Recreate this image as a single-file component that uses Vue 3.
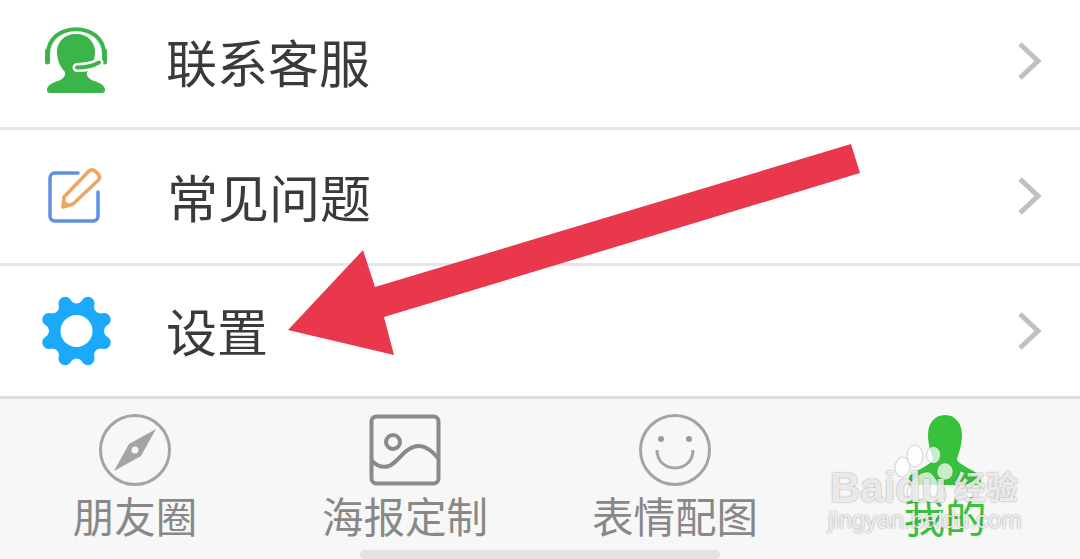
<script setup>
// gear outline: radius swings between notches and 8 flat-topped teeth
const gearPath = (() => {
  const points = []
  for (let i = 0; i < 360; i += 3) {
    const a = (i * Math.PI) / 180
    const wave = Math.cos(8 * (a - Math.PI / 8))
    const r = 32 + 4.5 * Math.sign(wave) * Math.pow(Math.abs(wave), 0.6)
    points.push(`${(36.5 + r * Math.sin(a)).toFixed(2)} ${(36 - r * Math.cos(a)).toFixed(2)}`)
  }
  return 'M' + points.join('L') + 'Z'
})()

const rows = [
  { id: 'service', label: '联系客服' },
  { id: 'faq', label: '常见问题' },
  { id: 'settings', label: '设置' }
]

const tabs = [
  { id: 'moments', label: '朋友圈' },
  { id: 'poster', label: '海报定制' },
  { id: 'emoji', label: '表情配图' },
  { id: 'me', label: '我的', active: true }
]
</script>

<template>
  <div class="page">
    <div class="menu">
      <div v-for="row in rows" :key="row.id" class="row" :class="'row-' + row.id">
        <div class="row-icon">
          <svg v-if="row.id === 'service'" width="72" height="72" viewBox="0 0 72 72">
            <path d="M8 31C8 -2 64 -2 64 31" fill="none" stroke="#3bb54a" stroke-width="4" />
            <path d="M7.500 28V39M64.500 28V39" stroke="#3bb54a" stroke-width="5" stroke-linecap="round" />
            <path d="M36 11C48 11 55 19 55 29C55 38 51 45 47 49C46 53 49 56 54 58C61 60 65 63 65 67C65 69 64 70 62 70H10C8 70 7 69 7 67C7 63 11 60 18 58C23 56 26 53 25 49C21 45 17 38 17 29C17 19 24 11 36 11Z" fill="#3bb54a" />
            <path d="M37 44.500C47 44.500 53 43 59 39.500" fill="none" stroke="#fff" stroke-width="9" stroke-linecap="round" />
            <path d="M37 44.500C47 44.500 53 43 59 39.500" fill="none" stroke="#3bb54a" stroke-width="4" stroke-linecap="round" />
          </svg>
          <svg v-else-if="row.id === 'faq'" width="72" height="72" viewBox="0 0 72 72">
            <path d="M38 12H15C12 12 10 14 10 17V55C10 58 12 60 15 60H53C56 60 58 58 58 55V31" fill="none" stroke="#5d90e2" stroke-width="3.500" stroke-linecap="round" />
            <path d="M24 36L49 10C51 8.500 53 8.500 55 10L58 13C60 15 60 17 58.500 19L33 43L23 46Z" fill="none" stroke="#eba65f" stroke-width="3.500" stroke-linejoin="round" />
            <path d="M24 39L30 44L22 46.500Z" fill="#eba65f" />
          </svg>
          <svg v-else width="72" height="72" viewBox="0 0 72 72">
            <path :d="gearPath" fill="#1aa9fb" />
            <circle cx="36.500" cy="36" r="16" fill="#fff" />
          </svg>
        </div>
        <span class="row-label">{{ row.label }}</span>
        <svg class="chevron" width="26" height="40" viewBox="0 0 26 40">
          <path d="M4 3L22 20L4 37" fill="none" stroke="#c0c0c2" stroke-width="5" />
        </svg>
      </div>
    </div>

    <div class="tabbar">
      <div v-for="tab in tabs" :key="tab.id" class="tab" :class="{ active: tab.active }">
        <svg v-if="tab.id === 'moments'" width="72" height="72" viewBox="0 0 72 72">
          <circle cx="36" cy="36" r="34.500" fill="none" stroke="#a2a4a7" stroke-width="3" />
          <path d="M57 15L42 42L15 57L30 30Z" fill="#a2a4a7" />
          <circle cx="36" cy="36" r="3.500" fill="#f7f7f7" />
        </svg>
        <svg v-else-if="tab.id === 'poster'" width="72" height="72" viewBox="0 0 72 72">
          <rect x="2.500" y="2.500" width="67" height="67" rx="5" fill="none" stroke="#8a8a8a" stroke-width="4" />
          <circle cx="24" cy="28" r="7" fill="none" stroke="#8a8a8a" stroke-width="4" />
          <path d="M3 47C8 52 14 54 20 52C30 48 36 32 50 32C58 32 64 38 69 44" fill="none" stroke="#8a8a8a" stroke-width="4" />
        </svg>
        <svg v-else-if="tab.id === 'emoji'" width="72" height="72" viewBox="0 0 72 72">
          <circle cx="36" cy="36" r="34.500" fill="none" stroke="#a2a4a7" stroke-width="3" />
          <circle cx="22" cy="25" r="3" fill="#9a9a9a" />
          <circle cx="50" cy="25" r="3" fill="#9a9a9a" />
          <path d="M18 36C18 60 54 60 54 36" fill="none" stroke="#a2a4a7" stroke-width="3" />
        </svg>
        <svg v-else width="72" height="72" viewBox="0 0 72 72">
          <path d="M36 1C47 1 53 10 53 21C53 33 48 43 48 46C50 50 62 55 72 62V71H0V62C10 55 22 50 24 46C24 43 19 33 19 21C19 10 25 1 36 1Z" fill="#38c23c" />
        </svg>
        <span class="tab-label">{{ tab.label }}</span>
      </div>
    </div>

    <div class="home-bar"></div>

    <svg class="arrow" width="1080" height="559" viewBox="0 0 1080 559">
      <polygon points="851,144 860,173 384,317 394,355 288,330 363,250 375,287" fill="#e9374c" />
    </svg>

    <div class="watermark">
      <svg class="paw" width="64" height="76" viewBox="0 0 64 76">
        <g fill="#fff" fill-opacity="0.72" stroke="#000" stroke-opacity="0.16">
          <ellipse cx="8.500" cy="23" rx="7.500" ry="10" transform="rotate(10 8.500 23)" />
          <ellipse cx="21" cy="12" rx="8" ry="11" />
          <ellipse cx="39.500" cy="11" rx="7" ry="8.500" />
          <ellipse cx="51" cy="27.500" rx="8" ry="8.500" />
          <path d="M33 28C39 28 41 36 48 42C55 48 53 59 43 59C38 59 35 57 31 58C20 60 11 55 14 45C17 37 25 28 33 28Z" />
        </g>
      </svg>
      <span class="wm-baidu">Baidu</span>
      <span class="wm-jingyan">经验</span>
      <span class="wm-url">jingyan.baidu.com</span>
    </div>
  </div>
</template>

<style>
html,
body {
  margin: 0;
  background: #fff;
}
</style>

<style scoped>
.page {
  position: relative;
  width: 1080px;
  height: 559px;
  overflow: hidden;
  background: #fff;
  font-family: "Noto Sans CJK SC", "Noto Sans", sans-serif;
}

.row {
  display: flex;
  align-items: center;
  box-sizing: border-box;
  padding: 0 38px 0 40px;
  border-bottom: 3px solid #e6e6e8;
}

.row-service {
  height: 130px;
}

.row-faq {
  height: 136px;
}

.row-settings {
  height: 133px;
  border-bottom-color: #dcdcdc;
}

.row-icon {
  display: flex;
  width: 72px;
  height: 72px;
  margin-right: 54px;
}

.row-service .row-icon {
  margin-bottom: 10px;
}

.row-service .chevron {
  margin-bottom: 6px;
}

.row-faq .chevron {
  margin-bottom: 2px;
}

.row-label {
  font-size: 51px;
  line-height: 60px;
  margin-bottom: 2px;
  color: #3a3a3a;
}

.row-service .row-label {
  margin-bottom: 5px;
}

.row-faq .row-label {
  margin-left: 1px;
}

.chevron {
  margin-left: auto;
}

.tabbar {
  display: grid;
  grid-template-columns: repeat(4, 1fr);
  height: 160px;
  padding-top: 15px;
  box-sizing: border-box;
  background: #f7f7f7;
}

.tab {
  display: flex;
  flex-direction: column;
  align-items: center;
}

.tab-label {
  font-size: 41.5px;
  line-height: 50px;
  margin-top: 4px;
  color: #888;
}

.tab.active .tab-label {
  color: #38c23c;
}

.home-bar {
  position: absolute;
  left: 360px;
  bottom: 0;
  width: 360px;
  height: 9px;
  border-radius: 5px;
  background: #e2e2e2;
}

.arrow {
  position: absolute;
  left: 0;
  top: 0;
}

.watermark {
  position: absolute;
  left: 828px;
  top: 440px;
  width: 200px;
  height: 100px;
  color: rgba(255, 255, 255, 0.82);
  font-family: "Liberation Sans", "Noto Sans CJK SC", sans-serif;
  text-shadow: 0 0 2px rgba(0, 0, 0, 0.45);
}

.paw {
  position: absolute;
  left: 66px;
  top: 4px;
}

.wm-baidu {
  position: absolute;
  left: 2px;
  top: 23px;
  font-size: 42px;
  line-height: 50px;
  font-weight: 700;
}

.wm-jingyan {
  position: absolute;
  left: 126px;
  top: 28px;
  font-size: 32px;
  line-height: 40px;
  font-weight: 700;
}

.wm-url {
  position: absolute;
  left: 0;
  top: 65px;
  font-size: 24px;
  line-height: 30px;
}
</style>
